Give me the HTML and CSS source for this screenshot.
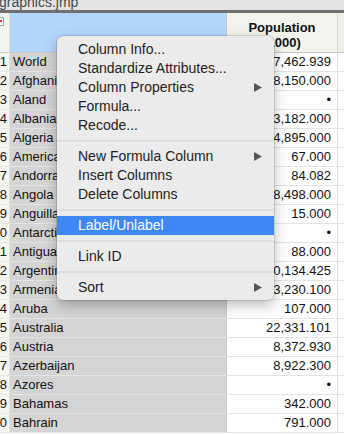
FILE: index.html
```html
<!doctype html>
<html>
  <head>
    <title>Demographics.jmp</title>
    <link rel="stylesheet" href="styles.css">
  </head>
  <body>
    <div class="window">
      <div class="titlebar"><span>graphics.jmp</span></div>
      <div class="titlebar-rule"></div>

      <div class="grid">
        <div class="hcell hnum"><span class="tbl-icon"></span></div>
        <div class="hcell hname"></div>
        <div class="hcell hpop">Population<br>(1000)</div>
        <div class="hcell hnext"></div>

        <div class="cell num">1</div><div class="cell name">World</div><div class="cell pop">7,462.939</div><div class="cell next"></div>
        <div class="cell num">2</div><div class="cell name">Afghanistan</div><div class="cell pop">38,150.000</div><div class="cell next"></div>
        <div class="cell num">3</div><div class="cell name">Aland</div><div class="cell pop">•</div><div class="cell next"></div>
        <div class="cell num">4</div><div class="cell name">Albania</div><div class="cell pop">3,182.000</div><div class="cell next"></div>
        <div class="cell num">5</div><div class="cell name">Algeria</div><div class="cell pop">4,895.000</div><div class="cell next"></div>
        <div class="cell num">6</div><div class="cell name">American Samoa</div><div class="cell pop">67.000</div><div class="cell next"></div>
        <div class="cell num">7</div><div class="cell name">Andorra</div><div class="cell pop">84.082</div><div class="cell next"></div>
        <div class="cell num">8</div><div class="cell name">Angola</div><div class="cell pop">28,498.000</div><div class="cell next"></div>
        <div class="cell num">9</div><div class="cell name">Anguilla</div><div class="cell pop">15.000</div><div class="cell next"></div>
        <div class="cell num">10</div><div class="cell name">Antarctica</div><div class="cell pop">•</div><div class="cell next"></div>
        <div class="cell num">11</div><div class="cell name">Antigua and Barbuda</div><div class="cell pop">88.000</div><div class="cell next"></div>
        <div class="cell num">12</div><div class="cell name">Argentina</div><div class="cell pop">40,134.425</div><div class="cell next"></div>
        <div class="cell num">13</div><div class="cell name">Armenia</div><div class="cell pop">3,230.100</div><div class="cell next"></div>
        <div class="cell num">14</div><div class="cell name">Aruba</div><div class="cell pop">107.000</div><div class="cell next"></div>
        <div class="cell num">15</div><div class="cell name">Australia</div><div class="cell pop">22,331.101</div><div class="cell next"></div>
        <div class="cell num">16</div><div class="cell name">Austria</div><div class="cell pop">8,372.930</div><div class="cell next"></div>
        <div class="cell num">17</div><div class="cell name">Azerbaijan</div><div class="cell pop">8,922.300</div><div class="cell next"></div>
        <div class="cell num">18</div><div class="cell name">Azores</div><div class="cell pop">•</div><div class="cell next"></div>
        <div class="cell num">19</div><div class="cell name">Bahamas</div><div class="cell pop">342.000</div><div class="cell next"></div>
        <div class="cell num">20</div><div class="cell name">Bahrain</div><div class="cell pop">791.000</div><div class="cell next"></div>
      </div>

      <!-- column context menu -->
      <div class="menu">
        <div class="item">Column Info...</div>
        <div class="item">Standardize Attributes...</div>
        <div class="item">Column Properties <svg class="arrow" width="8" height="9" viewBox="0 0 8 9"><polygon points="0,0 8,4.5 0,9"/></svg></div>
        <div class="item">Formula...</div>
        <div class="item">Recode...</div>
        <div class="sep"></div>
        <div class="item">New Formula Column <svg class="arrow" width="8" height="9" viewBox="0 0 8 9"><polygon points="0,0 8,4.5 0,9"/></svg></div>
        <div class="item">Insert Columns</div>
        <div class="item">Delete Columns</div>
        <div class="sep"></div>
        <div class="item active">Label/Unlabel</div>
        <div class="sep"></div>
        <div class="item">Link ID</div>
        <div class="sep"></div>
        <div class="item">Sort <svg class="arrow" width="8" height="9" viewBox="0 0 8 9"><polygon points="0,0 8,4.5 0,9"/></svg></div>
      </div>
    </div>
  </body>
</html>
```
FILE: styles.css
```css
body { margin: 0; font-family: "Liberation Sans", Arial, sans-serif; background: #fff; }

.window { position: relative; width: 344px; height: 434px; overflow: hidden; }

.titlebar { height: 10px; background: #e3e3e3; overflow: hidden; font-size: 14px; line-height: 14px; color: #4a4a4a; }
.titlebar span { display: block; margin-top: -5px; margin-left: -1px; white-space: nowrap; }
.titlebar-rule { height: 3px; background: #6f6f6f; }

.grid { display: grid; grid-template-columns: 10px 217px 111px 6px; grid-template-rows: 40px; grid-auto-rows: 19px; }

.hcell { box-sizing: border-box; border-bottom: 1px solid #c9c9c4; overflow: hidden; }
.hnum { background: #f4f4ef; border-right: 1px solid #dcdcd6; position: relative; }
.hname { background: #b4d5fb; border-right: 1px solid #c5c5c5; }
.hpop { background: #f3f3ee; border-right: 1px solid #d6d6d1; font-size: 13px; font-weight: bold; line-height: 15px; text-align: center; padding-top: 7px; color: #111; }
.hnext { background: #efefea; }

.tbl-icon { position: absolute; left: -5px; top: 4px; width: 7px; height: 7px; border: 1px solid #a0a0a0; background: #fff; }
.tbl-icon::after { content: ""; position: absolute; right: 1px; top: 2px; width: 2px; height: 2px; background: #d33; }

.cell { box-sizing: border-box; font-size: 13px; line-height: 18px; white-space: nowrap; overflow: hidden; color: #111; border-bottom: 1px solid #e3e3e3; }
.cell.num { background: #f6f6f1; border-right: 1px solid #e2e2dc; border-bottom-color: #e6e6e1; display: flex; justify-content: flex-end; padding-right: 2px; }
.cell.name { background: #d4d4d4; border-right: 1px solid #c8c8c8; border-bottom-color: #e4e4e4; padding-left: 3px; }
.cell.pop { background: #fff; border-right: 1px solid #dcdcdc; text-align: right; padding-right: 6px; }
.cell.next { background: #fff; }

.menu { position: absolute; left: 57px; top: 36px; width: 217px; box-sizing: border-box; padding: 4px 0 3px; background: #ebebeb; border-radius: 6px; box-shadow: 0 0 0 0.5px rgba(0, 0, 0, 0.22), 0 5px 14px rgba(0, 0, 0, 0.28); font-size: 14px; color: #222; }
.item { height: 19px; line-height: 19px; padding: 0 12px 0 21px; display: flex; justify-content: space-between; align-items: center; white-space: nowrap; }
.item.active { background: #3f87f5; color: #fff; }
.arrow { fill: #555; }
.sep { height: 12px; display: flex; align-items: center; }
.sep::before { content: ""; flex: 1; height: 2px; background: #dcdcdc; }
```
